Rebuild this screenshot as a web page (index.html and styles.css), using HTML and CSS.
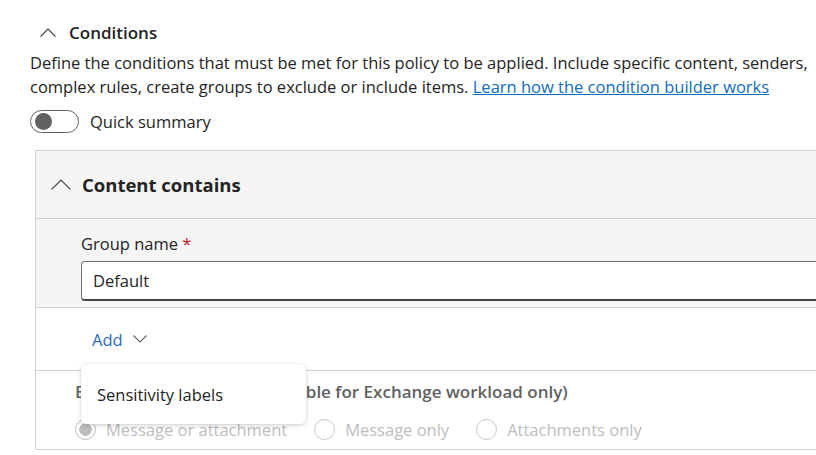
FILE: index.html
```html
<!DOCTYPE html>
<html lang="en">
<head>
    <meta charset="UTF-8">
    <meta name="viewport" content="width=device-width, initial-scale=1.0">
    <title>Conditions</title>
    <link rel="stylesheet" href="styles.css">
</head>
<body>
    <div class="page">
        <div class="section-header">
            <svg class="chev-up" width="16" height="9" viewBox="0 0 16 9"><polyline points="0.5,8.5 8,1 15.5,8.5" fill="none" stroke="#424242" stroke-width="1.2"/></svg>
            <span>Conditions</span>
        </div>
        <p class="desc">Define the conditions that must be met for this policy to be applied. Include specific content, senders, complex rules, create groups to exclude or include items. <a href="#">Learn how the condition builder works</a></p>
        <div class="toggle-row">
            <span class="toggle"><span class="knob"></span></span>
            <span>Quick summary</span>
        </div>

        <div class="panel">
            <div class="panel-header">
                <svg width="20" height="11" viewBox="0 0 20 11"><polyline points="0.6,10.4 10,1 19.4,10.4" fill="none" stroke="#424242" stroke-width="1.2"/></svg>
                <span>Content contains</span>
            </div>
            <div class="group">
                <label class="field-label">Group name <span class="req">*</span></label>
                <div class="input">Default</div>
            </div>
            <div class="add-row">
                <a href="#" class="add-btn">Add
                    <svg width="14" height="8" viewBox="0 0 14 8"><polyline points="0.5,0.5 7,7 13.5,0.5" fill="none" stroke="#616161" stroke-width="1.1"/></svg>
                </a>
                <div class="menu">
                    <div class="menu-item">Sensitivity labels</div>
                </div>
            </div>
            <div class="scan-row">
                <div class="scan-title">Evaluate all content (applicable for Exchange workload only)</div>
                <div class="radios">
                    <label class="radio checked"><span class="circle"></span>Message or attachment</label>
                    <label class="radio"><span class="circle"></span>Message only</label>
                    <label class="radio"><span class="circle"></span>Attachments only</label>
                </div>
            </div>
        </div>
    </div>
</body>
</html>
```

FILE: styles.css
```css
body {
    margin: 0;
    overflow: hidden;
    font-family: "Open Sans", "Noto Sans", sans-serif;
    font-size: 16.5px;
    color: #242424;
    background: #fff;
}
.page {
    width: 900px;
    padding: 16px 0 0 30px;
}
.section-header {
    display: flex;
    align-items: center;
    gap: 13px;
    height: 32px;
    padding-left: 10px;
    font-size: 17px;
    font-weight: 600;
}
.desc {
    margin: 3px 0 0;
    width: 790px;
    line-height: 24px;
}
.desc a {
    color: #0f6cbd;
}
.toggle-row {
    display: flex;
    align-items: center;
    gap: 11px;
    height: 24px;
    margin-top: 10px;
}
.toggle {
    display: flex;
    align-items: center;
    box-sizing: border-box;
    width: 49px;
    height: 23px;
    padding-left: 4px;
    border: 1px solid #616161;
    border-radius: 12px;
}
.knob {
    width: 17px;
    height: 17px;
    border-radius: 50%;
    background: #616161;
}
.panel {
    margin: 17px 0 0 5px;
    border-left: 1px solid #d1d1d1;
    border-top: 1px solid #d1d1d1;
}
.panel-header {
    display: flex;
    align-items: center;
    gap: 11px;
    height: 67px;
    padding-left: 15px;
    background: #f5f5f5;
    border-bottom: 1px solid #d1d1d1;
    font-size: 18.5px;
    font-weight: 700;
}
.group {
    background: #f5f5f5;
    padding: 13px 0 6px 45px;
    border-bottom: 1px solid #d1d1d1;
}
.field-label {
    display: block;
    line-height: 24px;
}
.req {
    color: #c50f1f;
}
.input {
    box-sizing: border-box;
    height: 40px;
    margin-top: 5px;
    padding-left: 11px;
    display: flex;
    align-items: center;
    background: #fff;
    border: 1px solid #707070;
    border-bottom: 2px solid #444;
    border-radius: 4px;
}
.add-row {
    position: relative;
    height: 62px;
    display: flex;
    align-items: center;
    padding-left: 56px;
    border-bottom: 1px solid #d1d1d1;
}
.add-btn {
    display: flex;
    align-items: center;
    gap: 10px;
    color: #2b6cb8;
    text-decoration: none;
}
.menu {
    position: absolute;
    left: 45px;
    top: 56px;
    z-index: 2;
    width: 225px;
    height: 60px;
    box-sizing: border-box;
    padding-left: 16px;
    display: flex;
    align-items: center;
    background: #fff;
    border-radius: 5px;
    box-shadow: 0 0 2px rgba(0, 0, 0, 0.12), 0 2px 5px rgba(0, 0, 0, 0.14);
}
.scan-row {
    height: 78px;
    padding-left: 39px;
    border-bottom: 1px solid #d1d1d1;
}
.scan-title {
    padding-top: 9px;
    line-height: 24px;
    font-size: 17px;
    font-weight: 600;
    color: #616161;
}
.radios {
    display: flex;
    gap: 27px;
    margin-top: 14px;
}
.radio {
    display: flex;
    align-items: center;
    gap: 10px;
    color: #bdbdbd;
}
.circle {
    box-sizing: border-box;
    width: 21px;
    height: 21px;
    border-radius: 50%;
    border: 1px solid #c6c6c6;
}
.radio.checked .circle {
    border-color: #bdbdbd;
    background: radial-gradient(circle, #bdbdbd 0 6px, #fff 6.5px);
}
```
